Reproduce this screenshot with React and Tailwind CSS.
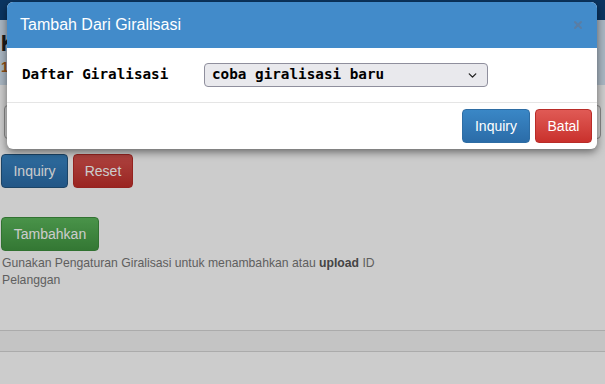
import { ChevronDown, X } from 'lucide-react';

const sans = { fontFamily: '"Liberation Sans", Arial, sans-serif' };
const mono = { fontFamily: '"DejaVu Sans Mono", monospace' };

export default function App() {
  return (
    <div className="relative h-[384px] w-[605px] overflow-hidden bg-white" style={sans}>
      {/* page behind the modal */}
      <div className="flex flex-col">
        <div className="h-[20px] bg-[#0e437a]" />
        <div className="flex h-[65px] flex-col justify-center bg-[#d4e4f3] pl-[1px]">
          <div className="text-[22px] font-bold leading-[28px] text-[#222]" style={mono}>KOLEKSI</div>
          <div className="text-[14px] font-bold leading-[18px] text-[#b5651d]">1 Data</div>
        </div>
        <div className="mx-[4px] mt-[20px] h-[34px] rounded border border-[#aaa] bg-white" />
        <div className="mt-[15px] flex gap-[5px] pl-[1px]">
          <button className="h-[34px] w-[67px] rounded border border-[#245580] bg-gradient-to-b from-[#3a87c6] to-[#2b6ca8] text-[14px] text-white">Inquiry</button>
          <button className="h-[34px] w-[60px] rounded border border-[#b92c28] bg-gradient-to-b from-[#d9534f] to-[#c12e2a] text-[14px] text-white">Reset</button>
        </div>
        <div className="mt-[29px] pl-[1px]">
          <button className="h-[34px] w-[98px] rounded border border-[#3e8f3e] bg-gradient-to-b from-[#5cb85c] to-[#419641] text-[14px] text-white">Tambahkan</button>
        </div>
        <p className="mt-[4px] w-[390px] pl-[2px] text-[12.2px] leading-[17px] text-[#777]">
          Gunakan Pengaturan Giralisasi untuk menambahkan atau <b className="text-[#555]">upload</b> ID Pelanggan
        </p>
        <div className="mt-[41px] h-[22px] border-y border-[#d6d6d6] bg-[#f5f5f5]" />
      </div>

      {/* backdrop */}
      <div className="absolute inset-0 bg-black/20" />

      {/* modal */}
      <div className="absolute left-[7px] top-[2px] w-[590px] overflow-hidden rounded-[6px] bg-white shadow-[0_3px_9px_rgba(0,0,0,0.5)]">
        <div className="flex h-[46px] items-center justify-between bg-[#428bca] pl-[13px] pr-[13px]">
          <span className="text-[16px] text-white">Tambah Dari Giralisasi</span>
          <X size={12} strokeWidth={4} className="text-[#5a7ea5]" />
        </div>
        <div className="flex h-[55px] items-center gap-[35px] border-b border-[#e5e5e5] pl-[15px]" style={mono}>
          <span className="w-[147px] text-[14.3px] font-bold text-black">Daftar Giralisasi</span>
          <div className="flex h-[24px] w-[284px] items-center justify-between rounded-[4px] border border-[#8f8f9d] bg-[#e9e9ed] pl-[7px] pr-[8px]">
            <span className="text-[14.3px] font-bold text-black">coba giralisasi baru</span>
            <ChevronDown size={13} strokeWidth={2.5} className="text-[#222]" />
          </div>
        </div>
        <div className="flex h-[46px] items-center justify-end gap-[5px] pr-[5px]">
          <button className="h-[34px] w-[68px] rounded border border-[#2e6da4] bg-gradient-to-b from-[#3a87c6] to-[#2b6ca8] text-[14px] text-white">Inquiry</button>
          <button className="h-[34px] w-[57px] rounded border border-[#b92c28] bg-gradient-to-b from-[#e05a55] to-[#c9302c] text-[14px] text-white">Batal</button>
        </div>
      </div>
    </div>
  );
}
